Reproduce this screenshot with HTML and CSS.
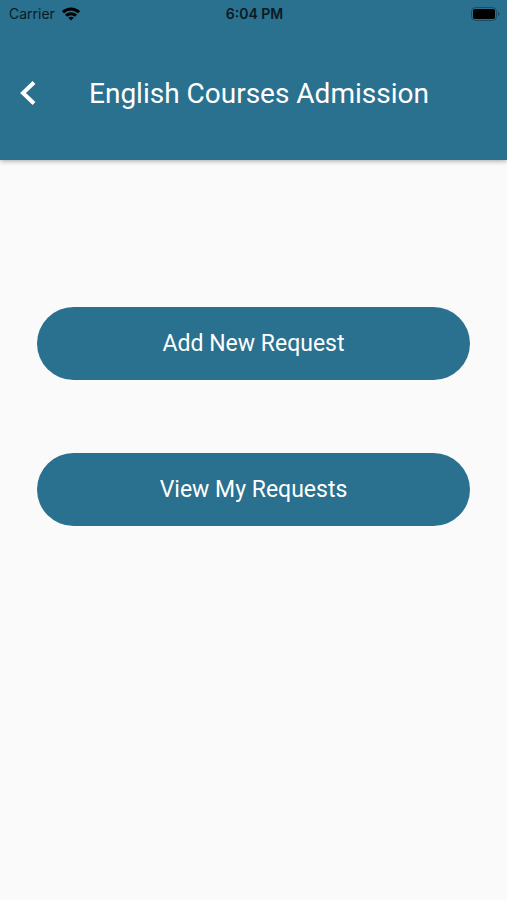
FILE: index.html
```html
<!DOCTYPE html>
<html lang="en">
<head>
    <meta charset="UTF-8">
    <meta name="viewport" content="width=device-width, initial-scale=1.0">
    <title>English Courses Admission</title>
    <link rel="stylesheet" href="styles.css">
</head>
<body>
    <header>
        <div class="status-bar">
            <div class="carrier">
                <span>Carrier</span>
                <svg width="18" height="14" viewBox="0 0 18 14" fill="none" stroke="currentColor" stroke-width="3" aria-hidden="true">
                    <path d="M1 5.2C5.500 .9 12.500 .9 17 5.2"/>
                    <path d="M4 8.700C6.800 6 11.200 6 14 8.700"/>
                    <path d="M9 13.500L6.200 10.700C7.700 9.300 10.300 9.300 11.800 10.700Z" fill="currentColor" stroke="none"/>
                </svg>
            </div>
            <div class="time">6:04 PM</div>
            <div class="battery">
                <svg width="29" height="14" viewBox="0 0 29 14" aria-hidden="true">
                    <rect x="0.500" y="0.500" width="25" height="13" rx="4" fill="none" stroke="#1b4c64"/>
                    <rect x="2" y="2" width="22" height="10" rx="2" fill="#000"/>
                    <path d="M27 5v4c2-.6 2-3.400 0-4z" fill="#1b4c64"/>
                </svg>
            </div>
        </div>
        <nav>
            <button class="back" aria-label="Back">
                <svg width="16" height="24" viewBox="0 0 16 24" fill="none" stroke="currentColor" stroke-width="4" aria-hidden="true">
                    <path d="M14 1.500L3 12l11 10.500"/>
                </svg>
            </button>
            <h1>English Courses Admission</h1>
        </nav>
    </header>

    <main>
        <button class="btn">Add New Request</button>
        <button class="btn">View My Requests</button>
    </main>
</body>
</html>
```
FILE: styles.css
```css
:root {
    --primary: #2a708f;
    --background: #fafafa;
}

* {
    margin: 0;
    padding: 0;
    box-sizing: border-box;
}

body {
    font-family: Roboto, "Open Sans", sans-serif;
    background: var(--background);
    color: white;
}

header {
    background: var(--primary);
    padding-bottom: 26px;
    box-shadow: 0 1px 5px rgba(0, 0, 0, 0.35);
}

.status-bar {
    display: grid;
    grid-template-columns: 1fr auto 1fr;
    align-items: center;
    height: 27px;
    padding: 0 7px 0 9px;
    font-family: Inter, "Liberation Sans", sans-serif;
    font-size: 14px;
    color: #0a1a22;
}

.carrier {
    display: flex;
    align-items: center;
    gap: 7px;
}

.carrier svg {
    color: black;
}

.time {
    font-weight: 600;
}

.battery {
    display: flex;
    justify-content: flex-end;
}

nav {
    display: flex;
    align-items: center;
    gap: 33px;
    min-height: 80px;
    margin-top: 26px;
    margin-bottom: 1px;
    padding-right: 20px;
}

.back {
    display: flex;
    padding: 16px 20px;
    background: none;
    border: none;
    color: white;
    cursor: pointer;
}

h1 {
    font-size: 28px;
    font-weight: 400;
    white-space: nowrap;
}

main {
    display: flex;
    flex-direction: column;
    gap: 73px;
    padding: 147px 37px 40px;
}

.btn {
    min-height: 73px;
    padding: 16px;
    border: none;
    border-radius: 37px;
    background: var(--primary);
    color: white;
    font-family: inherit;
    font-size: 23px;
    cursor: pointer;
}
```
